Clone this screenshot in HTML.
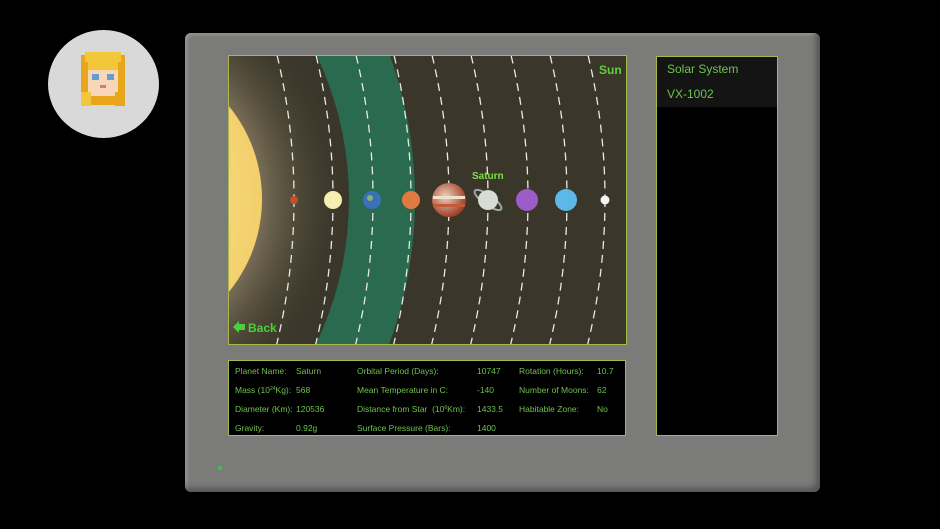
<!DOCTYPE html>
<html><head><style>
html,body{margin:0;background:#000;width:940px;height:529px;position:relative;overflow:hidden;font-family:"Liberation Sans",sans-serif}
.av{position:absolute;left:48px;top:30px;width:111px;height:108px;border-radius:50%;background:#d9d9d9}
.panel{position:absolute;left:185px;top:33px;width:635px;height:459px;background:#7b7c79;border-radius:6px;box-shadow:inset -4px -4px 6px #555,inset 2px 2px 3px #999}
.map{position:absolute;left:228px;top:55px;width:397px;height:288px;border:1px solid #a8b84a;background:#3a3629;overflow:hidden}
.info{position:absolute;left:228px;top:360px;width:396px;height:74px;border:1px solid #a8b84a;background:#000;color:#6fc24f;font-size:8.5px;overflow:hidden}
.info span{position:absolute;line-height:10px}
sup{font-size:5px;line-height:0;vertical-align:3px}
.side{position:absolute;left:656px;top:56px;width:120px;height:378px;border:1px solid #a8b84a;background:#000}
.side div{color:#6fc24f;font-size:12px;padding-left:10px;height:25px;line-height:25px;background:#141414}
.led{position:absolute;left:218px;top:466px;width:4px;height:4px;border-radius:50%;background:#3c3}
</style></head><body>
<div class="av"><svg width="111" height="108" viewBox="0 0 111 108">
<rect x="33" y="25" width="44" height="50" fill="#e8a61c"/><rect x="37" y="22" width="36" height="10" fill="#f2c83a"/>
<rect x="40" y="36" width="30" height="30" fill="#f6d8b8"/>
<rect x="40" y="32" width="30" height="8" fill="#f2c83a"/>
<rect x="44" y="44" width="7" height="6" fill="#6a9ad0"/><rect x="59" y="44" width="7" height="6" fill="#6a9ad0"/>
<rect x="52" y="55" width="6" height="3" fill="#e07090"/>
<rect x="33" y="62" width="10" height="14" fill="#f2c83a"/><rect x="67" y="62" width="10" height="14" fill="#e8a61c"/>
</svg></div>
<div class="panel"></div>
<div class="map"><svg width="397" height="288" viewBox="0 0 397 288">
<defs><radialGradient id="g" cx="0.5" cy="0.5" r="0.5"><stop offset="0.55" stop-color="#a8987a" stop-opacity="0.8"/><stop offset="1" stop-color="#3a3629" stop-opacity="0"/></radialGradient>
<radialGradient id="s" cx="0.3" cy="0.5" r="0.7"><stop offset="0" stop-color="#fff6c0"/><stop offset="1" stop-color="#f3cf6a"/></radialGradient>
<radialGradient id="j" cx="0.4" cy="0.4" r="0.6"><stop offset="0" stop-color="#f0d0b8"/><stop offset="1" stop-color="#a0402a"/></radialGradient></defs>
<circle cx="-235" cy="143" r="421" fill="#2a6b4f"/>
<circle cx="-215" cy="143" r="335" fill="#3a3629"/>
<circle cx="-114" cy="143" r="235" fill="url(#g)"/>
<circle cx="-114" cy="143" r="147" fill="url(#s)"/>
<g fill="none" stroke="#e8e8e8" stroke-width="1.3" stroke-dasharray="8 6">
<circle cx="-553" cy="143" r="618"/><circle cx="-514" cy="143" r="618"/><circle cx="-474" cy="143" r="618"/>
<circle cx="-436" cy="143" r="618"/><circle cx="-398" cy="143" r="618"/><circle cx="-359" cy="143" r="618"/>
<circle cx="-319" cy="143" r="618"/><circle cx="-280" cy="143" r="618"/><circle cx="-242" cy="143" r="618"/>
</g>
<circle cx="65" cy="144" r="4" fill="#c0502a"/>
<circle cx="104" cy="144" r="9" fill="#f4eeb0"/>
<circle cx="143" cy="144" r="9" fill="#3a70b8"/><circle cx="141" cy="142" r="3" fill="#8ab070"/>
<circle cx="182" cy="144" r="9" fill="#e07a40"/>
<circle cx="220" cy="144" r="17" fill="url(#j)"/><rect x="204" y="140" width="32" height="3" fill="#f0e0d0"/><rect x="204" y="148" width="32" height="3" fill="#c05a3a"/>
<ellipse cx="259" cy="144" rx="16" ry="5" transform="rotate(35 259 144)" fill="none" stroke="#9aa" stroke-width="2"/>
<circle cx="259" cy="144" r="10" fill="#d8dcd4"/>
<circle cx="298" cy="144" r="11" fill="#9b5ec8"/>
<circle cx="337" cy="144" r="11" fill="#5cb8e8"/>
<circle cx="376" cy="144" r="4.5" fill="#f4f4f4"/>
<text x="243" y="123" fill="#7ee04a" font-size="10" font-weight="bold" font-family="Liberation Sans">Saturn</text>
<text x="370" y="18" fill="#5ed040" font-size="12" font-weight="bold" font-family="Liberation Sans">Sun</text>
<path d="M4 271 L10 265 L10 268 L16 268 L16 274 L10 274 L10 277 Z" fill="#4cd040"/>
<text x="19" y="276" fill="#4cd040" font-size="12" font-weight="bold" font-family="Liberation Sans">Back</text>
</svg></div>
<div class="info">
<span style="left:6px;top:5px">Planet Name:</span><span style="left:67px;top:5px">Saturn</span>
<span style="left:128px;top:5px">Orbital Period (Days):</span><span style="left:248px;top:5px">10747</span>
<span style="left:290px;top:5px">Rotation (Hours):</span><span style="left:368px;top:5px">10.7</span>
<span style="left:6px;top:24px">Mass (10<sup>24</sup>Kg):</span><span style="left:67px;top:24px">568</span>
<span style="left:128px;top:24px">Mean Temperature in C:</span><span style="left:248px;top:24px">-140</span>
<span style="left:290px;top:24px">Number of Moons:</span><span style="left:368px;top:24px">62</span>
<span style="left:6px;top:43px">Diameter (Km):</span><span style="left:67px;top:43px">120536</span>
<span style="left:128px;top:43px">Distance from Star &nbsp;(10<sup>6</sup>Km):</span><span style="left:248px;top:43px">1433.5</span>
<span style="left:290px;top:43px">Habitable Zone:</span><span style="left:368px;top:43px">No</span>
<span style="left:6px;top:62px">Gravity:</span><span style="left:67px;top:62px">0.92g</span>
<span style="left:128px;top:62px">Surface Pressure (Bars):</span><span style="left:248px;top:62px">1400</span>
</div>
<div class="side"><div>Solar System</div><div>VX-1002</div></div>
<div class="led"></div>
</body></html>
